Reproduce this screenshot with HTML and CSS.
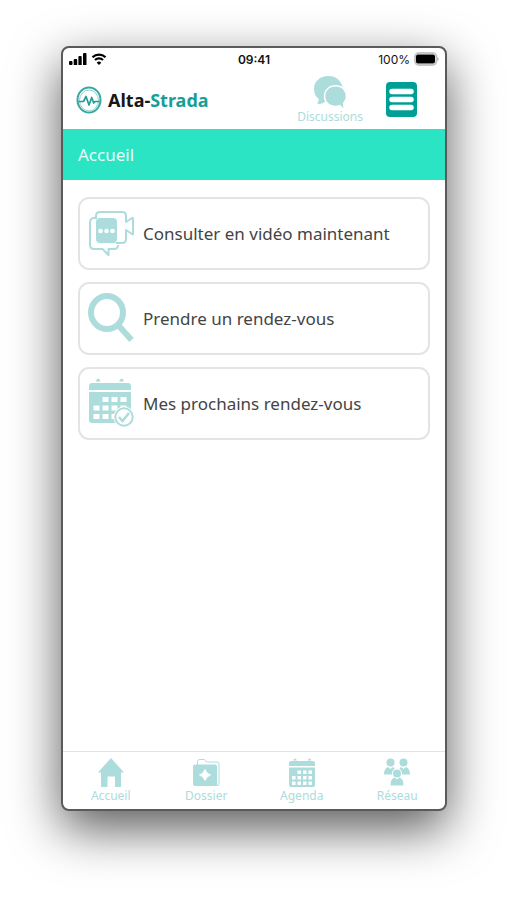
FILE: index.html
```html
<!DOCTYPE html>
<html lang="fr">
<head>
<meta charset="utf-8">
<meta name="viewport" content="width=device-width, initial-scale=1">
<title>Alta-Strada</title>
<link rel="stylesheet" href="styles.css">
</head>
<body>
<div class="phone">
  <div class="status">
    <div class="status-left">
      <svg width="18" height="12" viewBox="0 0 18 12" aria-hidden="true"><path d="M0 9a1 1 0 0 1 1-1h1.500a1 1 0 0 1 1 1v2a1 1 0 0 1-1 1H1a1 1 0 0 1-1-1zM4.700 7a1 1 0 0 1 1-1h1.500a1 1 0 0 1 1 1v5H4.700zM9.400 4a1 1 0 0 1 1-1h1.300a1 1 0 0 1 1 1v8H9.400zM14 1a1 1 0 0 1 1-1h1.500a1 1 0 0 1 1 1v11H14z"/></svg>
      <svg width="16" height="12" viewBox="0 0 16 12" aria-hidden="true"><path d="M1.500 4.300a9.300 9.300 0 0 1 13 0M4 7a5.700 5.700 0 0 1 8 0" fill="none" stroke="#000" stroke-width="2.200"/><path d="M8 12 5.700 9.700a3.300 3.300 0 0 1 4.600 0z"/></svg>
    </div>
    <span class="clock">09:41</span>
    <div class="status-right">
      <span>100%</span>
      <svg width="25" height="14" viewBox="0 0 25 14" aria-hidden="true"><rect x="1" y="1" width="21.400" height="12" rx="4" fill="#fff" stroke="#c6c6c6" stroke-width="2"/><rect x="2" y="2.500" width="19" height="9" rx="2"/><path d="M23.500 4.700q2 2.300 0 4.600z" fill="#999"/></svg>
    </div>
  </div>

  <header class="header">
    <a class="brand" href="#">
      <svg width="26" height="28" viewBox="0 0 26 28" fill="none" aria-hidden="true"><ellipse cx="13" cy="14" rx="11.500" ry="12.500" stroke="#35aaa2" stroke-width="2"/><ellipse cx="13" cy="14.500" rx="9.500" ry="10.500" stroke="#8ed0cb" stroke-width="1"/><path d="M2.500 15.500h5l2.500-5 3 8.500 2.700-7.500 2 5.500 1.300-1.500h4.500" stroke="#219e97" stroke-width="1.700" stroke-linejoin="round"/></svg>
      <span>Alta-<span class="brand-accent">Strada</span></span>
    </a>
    <div class="actions">
      <a class="discussions" href="#">
        <svg width="34" height="34" viewBox="0 0 34 34" aria-hidden="true"><path d="M15.500 1C7 1 1 6.500 1 13.500c0 5 2 8.500 5 10.800L4.300 29c4 .3 6.700-1.200 8.200-3l3 0 14-14C28 5.500 23 1 15.500 1z"/><path d="M22.500 11.500c-6 0-10.200 4.200-10.200 9.700s4.500 9.500 10.200 9.500c1.700 0 3.300-.3 4.700-1 1 1.500 2.200 3 3.500 3.300-.8-2-.7-4.300-.5-5.600 1.600-1.700 2.500-3.800 2.500-6.200 0-5.500-4.400-9.700-10.200-9.700z" stroke="#fff" stroke-width="3" paint-order="stroke"/></svg>
        <span>Discussions</span>
      </a>
      <button class="menu" type="button" aria-label="Menu">
        <svg width="31" height="35" viewBox="0 0 31 35" aria-hidden="true"><rect width="31" height="35" rx="4" fill="#009f96"/><path d="M6 9.500h19M6 17.500h19M6 25.500h19" stroke="#fff" stroke-width="5.500" stroke-linecap="round"/></svg>
      </button>
    </div>
  </header>

  <h1 class="title">Accueil</h1>

  <main class="cards">
    <a class="card" href="#">
      <svg width="48" height="52" viewBox="0 0 48 52" aria-hidden="true"><g fill="none" stroke="#acdcdc" stroke-width="2" stroke-linejoin="round"><path d="M8 11V8q0-4 4-4h22q4 0 4 4v6l6-4q1-.5 1 1v14q0 2-1 1l-6-4v9q0 4-4 4h-6"/><path d="M8 10H6q-4 0-4 5v22q0 4 4 4h8.500l6 6V41h5.500q4 0 4-4"/></g><rect x="8" y="10" width="21" height="25" rx="4" fill="#acdcdc"/><g fill="#fff"><circle cx="12.500" cy="23" r="2.300"/><circle cx="18.500" cy="23" r="2.300"/><circle cx="24.500" cy="23" r="2.300"/></g></svg>
      <span>Consulter en vidéo maintenant</span>
    </a>
    <a class="card" href="#">
      <svg width="48" height="52" viewBox="0 0 48 52" fill="none" stroke="#acdcdc" aria-hidden="true"><ellipse cx="19" cy="19.500" rx="16" ry="16.500" stroke-width="6"/><path d="m30.500 32.500 13 14.500" stroke-width="6"/></svg>
      <span>Prendre un rendez-vous</span>
    </a>
    <a class="card" href="#">
      <svg width="48" height="52" viewBox="0 0 48 52" fill="#acdcdc" aria-hidden="true"><path d="M7.500 3.500q3-6 5 0zM31 3.500q3-6 5 0zM1 12V8q0-3 3-3h36q3 0 3 3v4zM1 14h42v31H4q-3 0-3-3z"/><path fill="#fff" d="M14.500 19h6v5h-6zm9 0h6v5h-6zm9 0h6v5h-6zM5.500 27.500h6v5h-6zm9 0h6v5h-6zm9 0h6v5h-6zm9 0h6v5h-6zM5.500 36h6v5h-6zm9 0h6v5h-6zm9 0h6v5h-6z"/><circle cx="36" cy="39" r="10.500" fill="#fff"/><circle cx="36" cy="39" r="8.700" fill="none" stroke="#acdcdc" stroke-width="2"/><path d="m31 39 3.500 4 6.500-8" fill="none" stroke="#acdcdc" stroke-width="2.500"/></svg>
      <span>Mes prochains rendez-vous</span>
    </a>
  </main>

  <nav class="tabs">
    <a href="#">
      <svg width="28" height="30" viewBox="0 0 28 30" aria-hidden="true"><path d="M14 0 27 14.500h-3V29h-6V18.500h-7.500V29H4V14.500H1z"/></svg>
      <span>Accueil</span>
    </a>
    <a href="#">
      <svg width="28" height="30" viewBox="0 0 28 30" aria-hidden="true"><path d="M5.500 7V3.500q0-2 2-2h5l2 2.500H25q2 0 2 2v20q0 1.500-2 1.500" fill="none" stroke="#acdcdc"/><path d="M1 8.500q0-2 2-2h20q2 0 2 2V28H3q-2 0-2-2z"/><path d="m13 11.500 2 3.500 3.500 2-3.500 2-2 3.500-2-3.500-3.500-2 3.500-2z" fill="#fff" stroke="#fff"/></svg>
      <span>Dossier</span>
    </a>
    <a href="#">
      <svg width="28" height="30" viewBox="0 0 28 30" aria-hidden="true"><path d="M5 2.500q2-4 4 0zM19.500 2.500q2-4 4 0zM1 8V5q0-2 2-2h22q2 0 2 2v3zM1 9.500h26V27q0 2-2 2H3q-2 0-2-2z"/><path fill="#fff" d="M9.500 12.500h3.500v3.500H9.500zm5.500 0h3.500v3.500H15zm5.500 0h3.500v3.500h-3.500zM4 18h3.500v3.500H4zm5.500 0h3.500v3.500H9.500zm5.500 0h3.500v3.500H15zm5.500 0h3.500v3.500h-3.500zM4 23.500h3.500V27H4zm5.500 0h3.500V27H9.500zm5.500 0h3.500V27H15zm5.500 0h3.500V27h-3.500z"/></svg>
      <span>Agenda</span>
    </a>
    <a href="#">
      <svg width="28" height="30" viewBox="0 0 28 30" aria-hidden="true"><circle cx="7.500" cy="4.500" r="4"/><circle cx="20.500" cy="4.500" r="4"/><path d="M1 16.500q0-6 4-7.500l2.500 2L10 9q2 1 1.500 2-3 2-2.500 5.500zM27 16.500q0-6-4-7.500l-2.500 2L18 9q-2 1-1.500 2 3 2 2.500 5.500z"/><circle cx="14" cy="15.500" r="4"/><path d="M7.500 27.500q0-7 4-8l2.500 2 2.500-2q4 1 4 8z"/></svg>
      <span>Réseau</span>
    </a>
  </nav>
</div>
</body>
</html>
```
FILE: styles.css
```css
* {
  box-sizing: border-box;
}

body {
  margin: 0;
  min-height: 100vh;
  padding: 46px 60px 89px 61px;
  display: flex;
  background: #fff;
  font-family: "Noto Sans", "Open Sans", sans-serif;
  color: #444;
}

a {
  color: inherit;
  text-decoration: none;
}

svg {
  display: block;
  flex: none;
}

.phone {
  flex: 1;
  min-width: 0;
  display: flex;
  flex-direction: column;
  border: 2px solid #5a5a5a;
  border-radius: 8px;
  background: #fff;
  box-shadow: 0 18px 50px rgba(0, 0, 0, 0.65);
  overflow: hidden;
}

.status {
  display: grid;
  grid-template-columns: 1fr auto 1fr;
  align-items: center;
  height: 22px;
  padding: 0 6px;
  font-family: Inter, sans-serif;
  font-size: 12px;
  color: #111;
}

.status-left,
.status-right {
  display: flex;
  align-items: center;
  gap: 4px;
}

.status-right {
  justify-content: flex-end;
}

.clock {
  font-weight: 600;
}

.header {
  display: flex;
  align-items: center;
  justify-content: space-between;
  height: 59px;
  padding: 0 28px 0 13px;
}

.brand {
  display: flex;
  align-items: center;
  gap: 6px;
  font-size: 18px;
  font-weight: 700;
  color: #171717;
}

.brand-accent {
  color: #169f96;
}

.actions {
  display: flex;
  align-items: center;
  gap: 23px;
}

.discussions,
.tabs a {
  display: flex;
  flex-direction: column;
  align-items: center;
  font-size: 12px;
  line-height: 16px;
  color: #acdcdc;
  fill: #acdcdc;
}

.menu {
  border: 0;
  padding: 0;
  background: none;
}

.title {
  margin: 0;
  padding: 0 15px;
  background: #2be4c3;
  color: #e9fffb;
  font-size: 17px;
  font-weight: 400;
  line-height: 51px;
}

.cards {
  flex: 1;
  display: flex;
  flex-direction: column;
  gap: 12px;
  padding: 17px 15px;
}

.card {
  display: flex;
  align-items: center;
  gap: 7px;
  height: 73px;
  padding: 0 8px;
  border: 2px solid #e4e4e4;
  border-radius: 11px;
  font-size: 17px;
}

.tabs {
  display: grid;
  grid-template-columns: repeat(4, 1fr);
  border-top: 1px solid #e2e2e2;
  padding: 6px 0 5px;
}
```
